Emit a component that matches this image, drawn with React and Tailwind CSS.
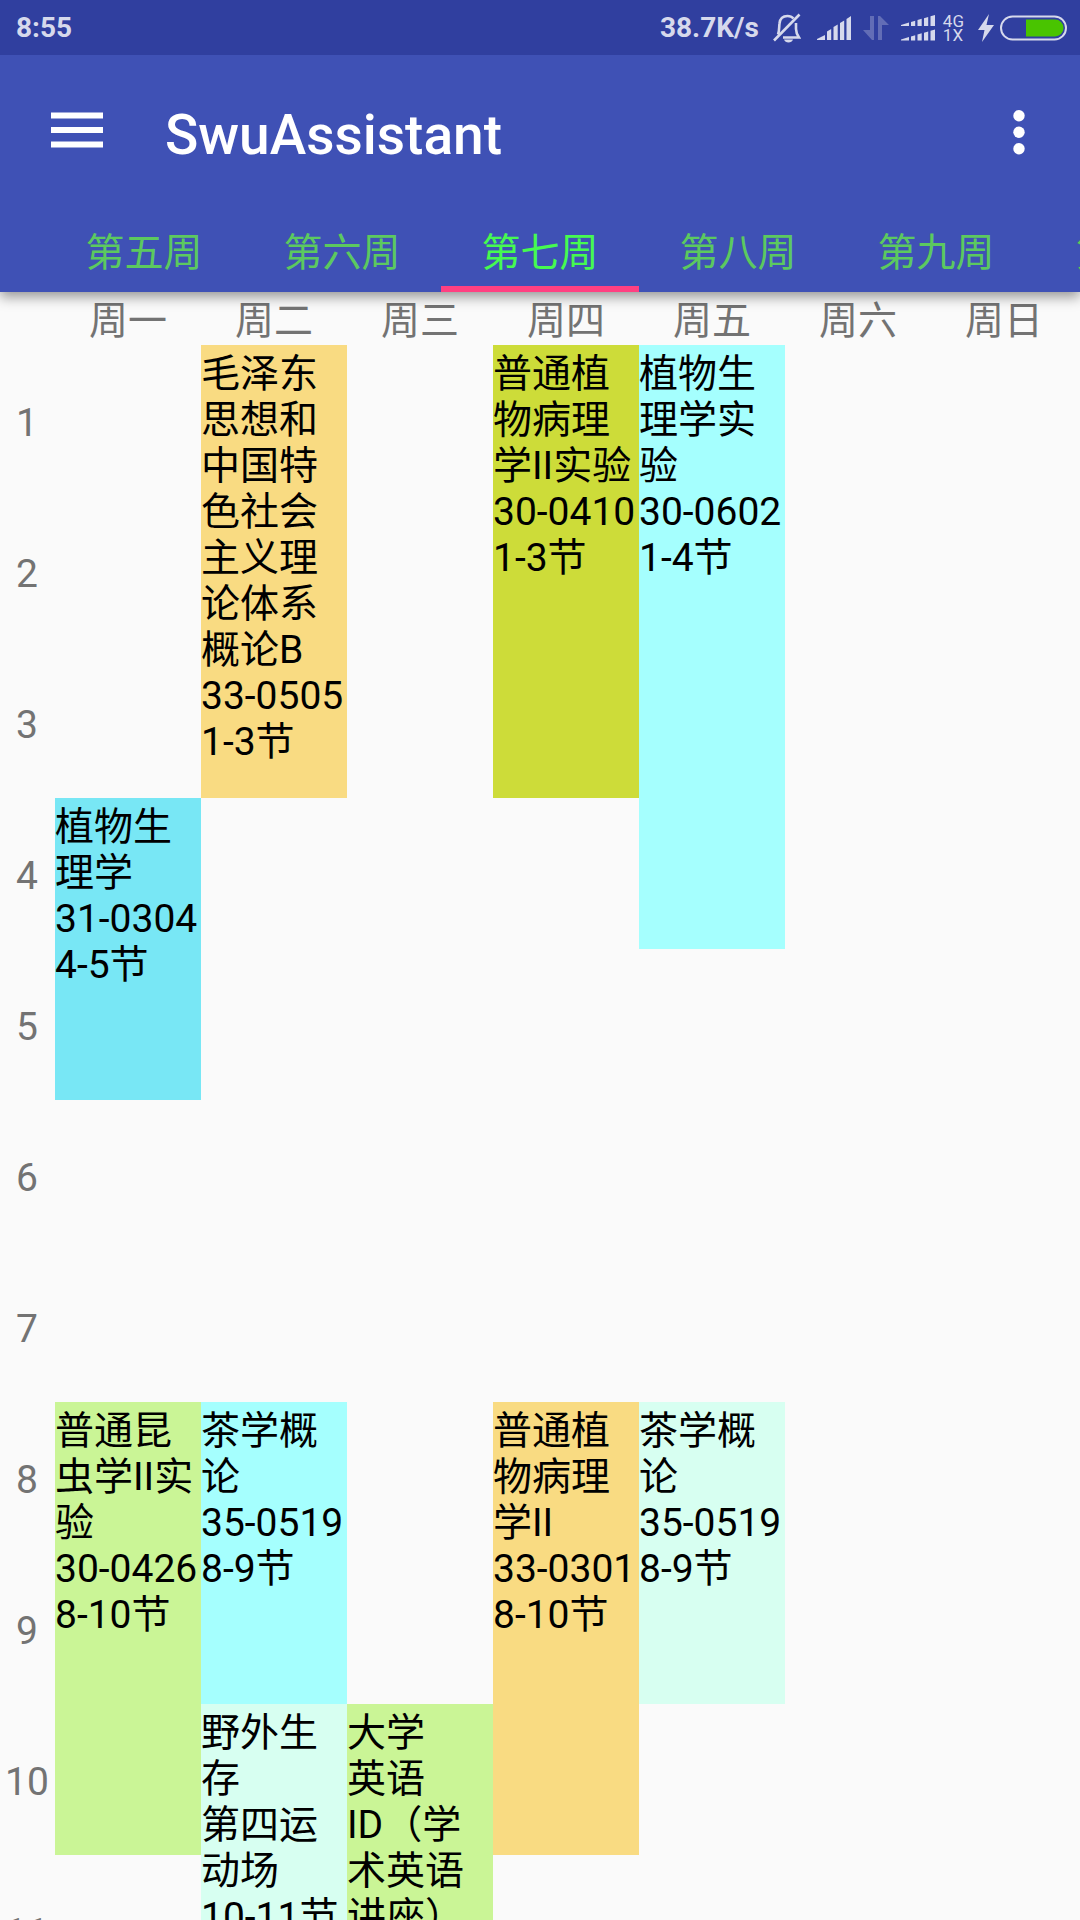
import React from "react";

const TABS = ["第五周", "第六周", "第七周", "第八周", "第九周", "第十周"];
const DAYS = ["周一", "周二", "周三", "周四", "周五", "周六", "周日"];
const PERIODS = [1, 2, 3, 4, 5, 6, 7, 8, 9, 10, 11];

const COURSES = [
  { day: 1, start: 1, span: 3, color: "bg-[#f9db82]", text: "毛泽东思想和中国特色社会主义理论体系概论B\n33-0505\n1-3节" },
  { day: 3, start: 1, span: 3, color: "bg-[#cddc39]", text: "普通植物病理学II实验\n30-0410\n1-3节" },
  { day: 4, start: 1, span: 4, color: "bg-[#a5fffe]", text: "植物生理学实验\n30-0602\n1-4节" },
  { day: 0, start: 4, span: 2, color: "bg-[#78e7f5]", text: "植物生理学\n31-0304\n4-5节" },
  { day: 0, start: 8, span: 3, color: "bg-[#caf596]", text: "普通昆虫学II实验\n30-0426\n8-10节" },
  { day: 1, start: 8, span: 2, color: "bg-[#a5fffe]", text: "茶学概论\n35-0519\n8-9节" },
  { day: 3, start: 8, span: 3, color: "bg-[#f9db82]", text: "普通植物病理学II\n33-0301\n8-10节" },
  { day: 4, start: 8, span: 2, color: "bg-[#d7fff1]", text: "茶学概论\n35-0519\n8-9节" },
  { day: 1, start: 10, span: 2, color: "bg-[#d7fff1]", text: "野外生存\n第四运动场\n10-11节" },
  { day: 2, start: 10, span: 2, color: "bg-[#caf596]", text: "大学\n英语\nID（学术英语讲座）" },
];

function BellOff() {
  return (
    <svg className="h-[30px] w-7" viewBox="0 0 28 30" fill="none" stroke="currentColor" strokeWidth="2.600">
      <path d="M5 21.500C6.500 18 6 14 6.500 10.500C7 5.500 10 3 14.500 3C17 3 19 3.800 20.500 5.500M23 10V16C23 19 24 21.500 26 24.500H10" />
      <path d="M1 27.500L26.500 1.500" />
      <path d="M11 26.500H20C19.500 28.500 17.500 29.500 15.500 29.500S11.500 28.500 11 26.500Z" fill="currentColor" stroke="none" />
    </svg>
  );
}

function Signal() {
  return (
    <svg className="h-6 w-[34px]" viewBox="0 0 34 24" fill="currentColor">
      <path d="M0 23L8 19V24H0ZM10 15.500L14.200 13V24H10ZM16.500 11L20.700 8.500V24H16.500ZM23 7L27.200 4.500V24H23ZM29.500 3L34 0V24H29.500Z" />
    </svg>
  );
}

function Transfer() {
  return (
    <svg className="h-[26px] w-[26px] opacity-30" viewBox="0 0 26 26" fill="currentColor">
      <path d="M7 1H11V25H9L0 15H7ZM15 1H17L26 10H19V25H15Z" />
    </svg>
  );
}

function DualSignal() {
  return (
    <svg className="h-[26px] w-[34px]" viewBox="0 0 34 26" fill="currentColor">
      <path id="dual-bars" d="M0 10L8 7.500V11H0ZM10 7L14.200 5.800V11H10ZM16.500 5L20.700 3.800V11H16.500ZM23 3.200L27.200 2V11H23ZM29.500 1.200L34 0V11H29.500Z" />
      <use href="#dual-bars" y="14.500" />
    </svg>
  );
}

function Bolt() {
  return (
    <svg className="h-7 w-4" viewBox="0 0 16 28" fill="currentColor">
      <path d="M11 0L0 16H6.500L4 28L16 11H8.500Z" />
    </svg>
  );
}

function Battery() {
  return (
    <svg className="h-[26px] w-[67px]" viewBox="0 0 67 26" fill="none">
      <rect x="1" y="1.500" width="65" height="23" rx="11.500" stroke="currentColor" strokeWidth="2" />
      <path d="M26 4.500H55A8.500 8.500 0 0 1 55 21.500H26Z" fill="#49c400" />
    </svg>
  );
}

function StatusBar() {
  return (
    <div className="flex h-[55px] items-center justify-between bg-[#303f9f] pt-px pr-[13px] pl-4 text-[28px] font-bold text-[#d6d9ec]">
      <span>8:55</span>
      <div className="flex items-center">
        <span className="mr-3.5">38.7K/s</span>
        <BellOff />
        <span className="ml-4"><Signal /></span>
        <span className="ml-3"><Transfer /></span>
        <span className="ml-3"><DualSignal /></span>
        <span className="ml-2 flex flex-col text-[17px] leading-[14px] font-normal">
          <span>4G</span>
          <span>1X</span>
        </span>
        <span className="ml-3.5"><Bolt /></span>
        <span className="ml-1.5"><Battery /></span>
      </div>
    </div>
  );
}

function Toolbar() {
  return (
    <div className="flex h-[156px] items-center pr-12 pl-[51px] text-white">
      <button type="button" aria-label="菜单">
        <svg className="h-[42px] w-[52px]" viewBox="0 0 52 42" fill="currentColor">
          <path d="M0 0.500H52V6.500H0ZM0 15H52V21H0ZM0 29.500H52V35.500H0Z" />
        </svg>
      </button>
      <h1 className="ml-[62px] flex-1 pt-1 text-[55px] font-medium">SwuAssistant</h1>
      <button type="button" aria-label="更多选项">
        <svg className="h-[46px] w-[26px]" viewBox="0 0 26 46" fill="currentColor">
          <circle cx="13" cy="5.700" r="5.700" />
          <circle cx="13" cy="22.200" r="5.700" />
          <circle cx="13" cy="38.700" r="5.700" />
        </svg>
      </button>
    </div>
  );
}

function WeekTabs() {
  return (
    <div role="tablist" className="flex h-[81px] overflow-hidden pl-[45px]">
      {TABS.map((tab) => (
        <button
          key={tab}
          type="button"
          role="tab"
          aria-selected={tab === "第七周"}
          className="w-[198px] shrink-0 border-y-6 border-transparent pt-0.5 text-[39px] leading-[46px] text-[#5cc95f] aria-selected:border-b-[#ff4081] aria-selected:text-[#46fa50]"
        >
          {tab}
        </button>
      ))}
    </div>
  );
}

function Timetable() {
  return (
    <table className="w-full table-fixed border-collapse text-[39px] leading-[46px]">
      <thead>
        <tr className="h-[53px] text-[#737373]">
          <td className="w-[55px] p-0" />
          {DAYS.map((day) => (
            <th key={day} scope="col" className="p-0 pt-1 font-normal">{day}</th>
          ))}
        </tr>
      </thead>
      <tbody>
        {PERIODS.map((period) => (
          <tr key={period} className="h-[151px]">
            <th scope="row" className="p-0 pt-1 pr-px font-normal text-[#737373]">{period}</th>
            {DAYS.map((day, d) => {
              const course = COURSES.find((c) => c.day === d && period >= c.start && period < c.start + c.span);
              if (!course) return <td key={day} className="p-0" />;
              if (course.start !== period) return null;
              return (
                <td key={day} rowSpan={course.span} className={`p-0 pt-1.5 align-top whitespace-pre-line text-black ${course.color}`}>
                  {course.text}
                </td>
              );
            })}
          </tr>
        ))}
      </tbody>
    </table>
  );
}

export default function App() {
  return (
    <div className="flex h-screen flex-col overflow-hidden bg-[#fafafa] font-['Roboto','Noto_Sans_CJK_SC',sans-serif]">
      <header className="relative z-10 shrink-0 bg-[#3f51b5] shadow-[0_5px_12px_rgba(0,0,0,0.4)]">
        <StatusBar />
        <Toolbar />
        <WeekTabs />
      </header>
      <main className="min-h-0 flex-1 overflow-hidden pr-[3px]">
        <Timetable />
      </main>
    </div>
  );
}
